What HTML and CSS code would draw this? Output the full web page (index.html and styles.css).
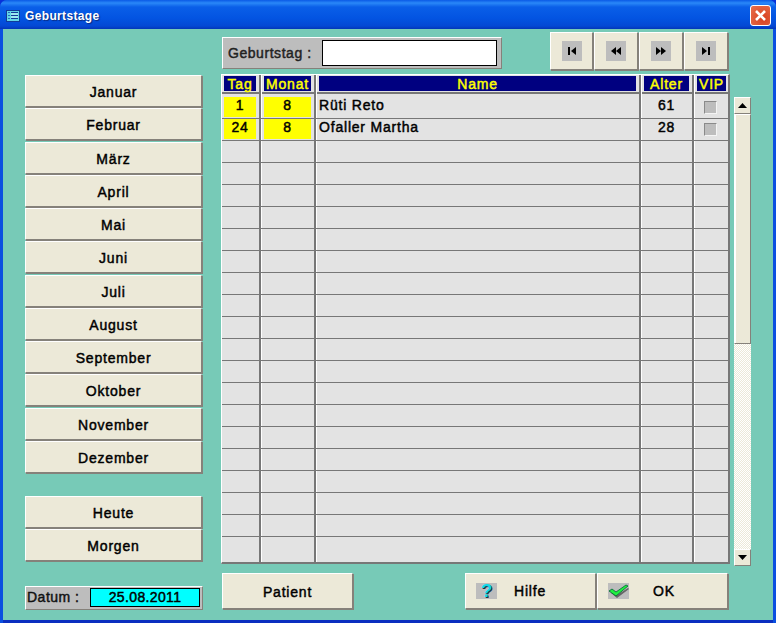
FILE: index.html
```html
<!DOCTYPE html>
<html lang="de">
<head>
<meta charset="utf-8">
<title>Geburtstage</title>
<link rel="stylesheet" href="styles.css">
</head>
<body>
<div class="window">
  <header class="titlebar">
    <svg class="appicon" width="14" height="12" viewBox="0 0 14 12"><rect width="14" height="12" fill="#123a9a"/><rect x="1" y="1" width="12" height="10" fill="#62d6e6"/><path d="M2 2.500h2M2 5.500h2M2 8.500h2" stroke="#2a6ac0"/><path d="M5 2.500h7M5 5.500h7M5 8.500h7" stroke="#123a9a"/><path d="M5 4h7M5 7h7" stroke="#d8f8f8"/></svg>
    <span class="title">Geburtstage</span>
    <span class="close"><svg width="13" height="13" viewBox="0 0 13 13"><path d="M2 2l9 9M11 2l-9 9" stroke="#fff" stroke-width="2.6"/></svg></span>
  </header>
  <main class="client">
    <aside class="left">
      <div class="months">
        <button class="btn month">Januar</button>
        <button class="btn month">Februar</button>
        <button class="btn month">März</button>
        <button class="btn month">April</button>
        <button class="btn month">Mai</button>
        <button class="btn month">Juni</button>
        <button class="btn month">Juli</button>
        <button class="btn month">August</button>
        <button class="btn month">September</button>
        <button class="btn month">Oktober</button>
        <button class="btn month">November</button>
        <button class="btn month">Dezember</button>
      </div>
      <div class="quick">
        <button class="btn month">Heute</button>
        <button class="btn month">Morgen</button>
      </div>
      <div class="datum"><span>Datum :</span><output class="datebox">25.08.2011</output></div>
    </aside>
    <section class="center">
      <div class="toprow">
        <div class="search"><label>Geburtstag :</label><span class="input"></span></div>
        <nav class="navs">
          <button class="btn nav"><span class="tile"><svg width="12" height="10" viewBox="0 0 12 10"><path d="M2 1h2v8H2zM10 1v8L5 5z"/></svg></span></button>
          <button class="btn nav"><span class="tile"><svg width="12" height="10" viewBox="0 0 12 10"><path d="M6 1v8L1 5zM11 1v8L6 5z"/></svg></span></button>
          <button class="btn nav"><span class="tile"><svg width="12" height="10" viewBox="0 0 12 10"><path d="M1 1v8l5-4zM6 1v8l5-4z"/></svg></span></button>
          <button class="btn nav"><span class="tile"><svg width="12" height="10" viewBox="0 0 12 10"><path d="M2 1v8l5-4zM8 1h2v8H8z"/></svg></span></button>
        </nav>
      </div>
      <div class="gridwrap">
        <div class="grid">
          <div class="head row">
            <div class="hc c1"><span>Tag</span></div><div class="hc c2"><span>Monat</span></div><div class="hc c3"><span>Name</span></div><div class="hc c4"><span>Alter</span></div><div class="hc c5"><span>VIP</span></div>
          </div>
          <div class="row"><div class="cell c1 y">1</div><div class="cell c2 y">8</div><div class="cell c3 nm">Rüti Reto</div><div class="cell c4">61</div><div class="cell c5"><i class="chk"></i></div></div>
          <div class="row"><div class="cell c1 y">24</div><div class="cell c2 y">8</div><div class="cell c3 nm">Ofaller Martha</div><div class="cell c4">28</div><div class="cell c5"><i class="chk"></i></div></div>
          <div class="row"><div class="cell c1"></div><div class="cell c2"></div><div class="cell c3"></div><div class="cell c4"></div><div class="cell c5"></div></div>
          <div class="row"><div class="cell c1"></div><div class="cell c2"></div><div class="cell c3"></div><div class="cell c4"></div><div class="cell c5"></div></div>
          <div class="row"><div class="cell c1"></div><div class="cell c2"></div><div class="cell c3"></div><div class="cell c4"></div><div class="cell c5"></div></div>
          <div class="row"><div class="cell c1"></div><div class="cell c2"></div><div class="cell c3"></div><div class="cell c4"></div><div class="cell c5"></div></div>
          <div class="row"><div class="cell c1"></div><div class="cell c2"></div><div class="cell c3"></div><div class="cell c4"></div><div class="cell c5"></div></div>
          <div class="row"><div class="cell c1"></div><div class="cell c2"></div><div class="cell c3"></div><div class="cell c4"></div><div class="cell c5"></div></div>
          <div class="row"><div class="cell c1"></div><div class="cell c2"></div><div class="cell c3"></div><div class="cell c4"></div><div class="cell c5"></div></div>
          <div class="row"><div class="cell c1"></div><div class="cell c2"></div><div class="cell c3"></div><div class="cell c4"></div><div class="cell c5"></div></div>
          <div class="row"><div class="cell c1"></div><div class="cell c2"></div><div class="cell c3"></div><div class="cell c4"></div><div class="cell c5"></div></div>
          <div class="row"><div class="cell c1"></div><div class="cell c2"></div><div class="cell c3"></div><div class="cell c4"></div><div class="cell c5"></div></div>
          <div class="row"><div class="cell c1"></div><div class="cell c2"></div><div class="cell c3"></div><div class="cell c4"></div><div class="cell c5"></div></div>
          <div class="row"><div class="cell c1"></div><div class="cell c2"></div><div class="cell c3"></div><div class="cell c4"></div><div class="cell c5"></div></div>
          <div class="row"><div class="cell c1"></div><div class="cell c2"></div><div class="cell c3"></div><div class="cell c4"></div><div class="cell c5"></div></div>
          <div class="row"><div class="cell c1"></div><div class="cell c2"></div><div class="cell c3"></div><div class="cell c4"></div><div class="cell c5"></div></div>
          <div class="row"><div class="cell c1"></div><div class="cell c2"></div><div class="cell c3"></div><div class="cell c4"></div><div class="cell c5"></div></div>
          <div class="row"><div class="cell c1"></div><div class="cell c2"></div><div class="cell c3"></div><div class="cell c4"></div><div class="cell c5"></div></div>
          <div class="row"><div class="cell c1"></div><div class="cell c2"></div><div class="cell c3"></div><div class="cell c4"></div><div class="cell c5"></div></div>
          <div class="row"><div class="cell c1"></div><div class="cell c2"></div><div class="cell c3"></div><div class="cell c4"></div><div class="cell c5"></div></div>
          <div class="row last"><div class="cell c1"></div><div class="cell c2"></div><div class="cell c3"></div><div class="cell c4"></div><div class="cell c5"></div></div>
        </div>
        <div class="scroll">
          <span class="sbtn"><svg width="9" height="5" viewBox="0 0 9 5"><path d="M4.500 0L9 5H0z"/></svg></span>
          <span class="thumb"></span>
          <span class="track"></span>
          <span class="sbtn"><svg width="9" height="5" viewBox="0 0 9 5"><path d="M0 0h9L4.500 5z"/></svg></span>
        </div>
      </div>
      <div class="bottom">
        <button class="btn patient">Patient</button>
        <div class="actions">
          <button class="btn act"><span class="itile"><span class="q">?</span></span><span class="lab">Hilfe</span></button>
          <button class="btn act"><span class="itile"><svg width="21" height="16" viewBox="0 0 21 16"><path d="M3 10l6 5L21 6l-1-1-11 7-4-3z" fill="#666"/><path d="M1 8l3-2 4 3L18 2l2 1L8 13z" fill="#20f040" stroke="#063" stroke-width=".8"/></svg></span><span class="lab okl">OK</span></button>
        </div>
      </div>
    </section>
  </main>
</div>
</body>
</html>
```
FILE: styles.css
```css
*{box-sizing:border-box}
html,body{margin:0;padding:0}
body{width:776px;height:623px;overflow:hidden;font-family:"Liberation Sans",Arial,sans-serif;background:#0831d9}
.window{width:776px;height:623px;display:flex;flex-direction:column;border-radius:7px 7px 0 0;background:#0a4fe0;overflow:hidden}
.titlebar{height:29px;flex:none;display:flex;align-items:center;padding:2px 5px 0 6px;color:#fff;background:linear-gradient(#0a5ae6 0,#2a88f8 3px,#0a5fe8 7px,#0354e2 18px,#0448d4 26px,#0336b8 29px)}
.appicon{flex:none;margin-right:5px}
.title{flex:1;font:bold 12px/14px "Liberation Sans",sans-serif;letter-spacing:.35px;text-shadow:1px 1px 1px #0a2a80}
.close{width:21px;height:21px;margin-top:-1px;display:flex;align-items:center;justify-content:center;border:1px solid #fff;border-radius:3px;background:radial-gradient(circle at 65% 65%,#d84020,#e8704c)}
.client{flex:1;margin:0 3px 3px;background:#77cab7;display:flex;padding:0 22px;box-shadow:0 3px 0 #0a2fc0}
.left{width:178px;flex:none;padding-top:46px;margin-right:19px}
.months,.quick{display:flex;flex-direction:column}
.quick{margin-top:22px}
.btn,.datum,.search,.cell,.hc span,.datebox{font:400 14px/15px "Liberation Sans",sans-serif;-webkit-text-stroke:.45px currentColor;letter-spacing:.8px}
.btn{display:flex;align-items:center;justify-content:center;padding:3px 0 0;margin:0;background:#ece9d8;border:1px solid;border-color:#fff #85817a #85817a #fff;box-shadow:1px 1px 0 #85817a;color:#000}
.month{height:32px;width:177px;margin-bottom:1.27px}
.datum{width:178px;height:24px;margin-top:23px;background:#bdbdbd;border:1px solid;border-color:#fff #85817a #85817a #fff;display:flex;align-items:center;padding-left:1px;color:#111;letter-spacing:.5px}
.datum span{width:63px;flex:none}
.datebox{width:110px;height:19px;background:#0ff;border:1px solid #000;text-align:center;line-height:17px;color:#000;letter-spacing:.35px}
.center{width:530px;flex:none;display:flex;flex-direction:column}
.toprow{height:43px;margin-top:2px;display:flex;justify-content:space-between}
.search{margin-top:6px;width:280px;height:32px;background:#bdbdbd;border:1px solid;border-color:#fff #85817a #85817a #fff;display:flex;align-items:center;padding-left:5px;color:#222;letter-spacing:.55px}
.search label{width:94px;flex:none}
.input{width:175px;height:26px;background:#fff;border:1px solid #000}
.navs{display:flex;gap:1px;margin:1px 24px 0 0;height:38px}
.nav{width:44px;height:38px;padding:0}
.nav:first-child{width:43px}
.tile{width:20px;height:20px;background:#bdbdbd;display:flex;align-items:center;justify-content:center}
.gridwrap{display:flex;height:492px;margin-left:-1px}
.grid{width:509px;height:490px;flex:none;display:flex;flex-direction:column;border:solid #777;border-width:1px 2px 2px 1px;border-top-color:#fff;border-left-color:#fff;background:#e3e3e3}
.row{display:flex;height:22px;flex:none;border-bottom:1px solid #777}
.row.head{border-bottom:0}
.row.last{flex:1;border-bottom:0}
.c1{width:40px}.c2{width:55px}.c3{width:325px}.c4{width:53px}.c5{flex:1}
.cell{border-right:1px solid #fff;box-shadow:inset -2px 0 0 #777;display:flex;align-items:flex-start;justify-content:center;padding:1px 3px 0 0;color:#000}
.cell.c5,.hc.c5{border-right:0;box-shadow:none}
.cell.c5{padding-right:0}
.y{background:linear-gradient(#ff0,#ff0) 2px 0/calc(100% - 7px) calc(100% - 1px) no-repeat}
.nm{justify-content:flex-start;padding-left:2px}
.hc{height:22px;padding:1px 5px 0 2px;display:flex;align-items:flex-start;border-right:1px solid #fff;box-shadow:inset -2px 0 0 #777;background:linear-gradient(#777,#777) 0 17px/100% 2px no-repeat}
.hc.c5{padding:1px 2px 0 2px}
.hc span{flex:1;height:15px;background:#000080;color:#ff0;text-align:center;line-height:16px}
.chk{width:13px;height:13px;margin:3px 2px 0 0;background:#bdbdbd;border:1px solid;border-color:#8a8a8a #f4f4f4 #f4f4f4 #8a8a8a}
.scroll{width:17px;margin:23px 0 0 4px;height:469px;display:flex;flex-direction:column;background:#fff}
.sbtn{height:17px;flex:none;display:flex;align-items:center;justify-content:center;background:#ece9d8;border:1px solid;border-color:#fff #85817a #85817a #fff}
.thumb{height:230px;flex:none;background:#ece9d8;border:1px solid;border-color:#fff #85817a #85817a #fff;box-shadow:inset 1px 0 0 #fff}
.track{flex:1;background:repeating-conic-gradient(#ece9d8 0 25%,#fff 0 50%) 0 0/2px 2px}
.bottom{display:flex;justify-content:space-between;margin-top:7px;height:37px;padding:0 24px 0 0}
.patient{width:131px;height:36px}
.actions{display:flex;gap:1px}
.act{width:131px;height:36px;justify-content:flex-start;padding:0 0 0 10px}
.itile{width:21px;height:16px;background:#bdbdbd;display:flex;justify-content:center;align-items:center;flex:none}
.q{font:bold 19px/16px "Liberation Sans",sans-serif;-webkit-text-stroke:0;letter-spacing:0;color:#10d8e8;text-shadow:1px 1px 0 #203040}
.lab{margin-left:17px}
.lab.okl{margin-left:24px}
```
